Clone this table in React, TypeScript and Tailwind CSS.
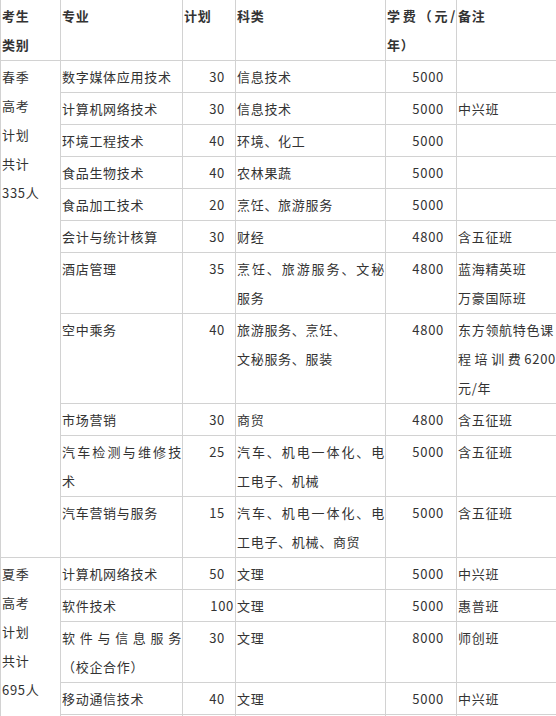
import React from "react";

type Line = string | { t: string; j: boolean };

const J = (t: string): Line => ({ t, j: true });

type Row = {
  major: Line[];
  plan: string;
  cat: Line[];
  fee: string;
  note: Line[];
  planTight?: boolean;
};

const spring: Row[] = [
  { major: ["数字媒体应用技术"], plan: "30", cat: ["信息技术"], fee: "5000", note: [] },
  { major: ["计算机网络技术"], plan: "30", cat: ["信息技术"], fee: "5000", note: ["中兴班"] },
  { major: ["环境工程技术"], plan: "40", cat: ["环境、化工"], fee: "5000", note: [] },
  { major: ["食品生物技术"], plan: "40", cat: ["农林果蔬"], fee: "5000", note: [] },
  { major: ["食品加工技术"], plan: "20", cat: ["烹饪、旅游服务"], fee: "5000", note: [] },
  { major: ["会计与统计核算"], plan: "30", cat: ["财经"], fee: "4800", note: ["含五征班"] },
  { major: ["酒店管理"], plan: "35", cat: [J("烹饪、旅游服务、文秘"), "服务"], fee: "4800", note: ["蓝海精英班", "万豪国际班"] },
  {
    major: ["空中乘务"],
    plan: "40",
    cat: ["旅游服务、烹饪、", "文秘服务、服装"],
    fee: "4800",
    note: ["东方领航特色课", J("程培训费6200"), "元/年"],
  },
  { major: ["市场营销"], plan: "30", cat: ["商贸"], fee: "4800", note: ["含五征班"] },
  { major: [J("汽车检测与维修技"), "术"], plan: "25", cat: [J("汽车、机电一体化、电"), "工电子、机械"], fee: "5000", note: ["含五征班"] },
  { major: ["汽车营销与服务"], plan: "15", cat: [J("汽车、机电一体化、电"), "工电子、机械、商贸"], fee: "5000", note: ["含五征班"] },
];

const summer: Row[] = [
  { major: ["计算机网络技术"], plan: "50", cat: ["文理"], fee: "5000", note: ["中兴班"] },
  { major: ["软件技术"], plan: "100", cat: ["文理"], fee: "5000", note: ["惠普班"], planTight: true },
  { major: [J("软件与信息服务"), "（校企合作）"], plan: "30", cat: ["文理"], fee: "8000", note: ["师创班"] },
  { major: ["移动通信技术"], plan: "40", cat: ["文理"], fee: "5000", note: ["中兴班"] },
  // next row only shows its top border at the bottom edge
  { major: [], plan: "", cat: [], fee: "", note: [] },
];

const cell = "border border-[#d2d2d2] align-top pl-px py-px leading-[29px]";

function Lines({ lines }: { lines: Line[] }) {
  return (
    <>
      {lines.map((l, i) =>
        typeof l === "string" ? (
          <div key={i}>{l}</div>
        ) : (
          <div key={i} className="text-justify [text-align-last:justify]">
            {l.t}
          </div>
        )
      )}
    </>
  );
}

function Group({ label, rows }: { label: string[]; rows: Row[] }) {
  return (
    <>
      {rows.map((r, i) => (
        <tr key={i} className="h-[32px]">
          {i === 0 && (
            <td rowSpan={rows.length} className={`${cell} pl-[2px]`}>
              <Lines lines={label} />
            </td>
          )}
          <td className={cell}>
            <Lines lines={r.major} />
          </td>
          <td className={`${cell} text-right ${r.planTight ? "pr-px" : "pr-[10px]"}`}>{r.plan}</td>
          <td className={cell}>
            <Lines lines={r.cat} />
          </td>
          <td className={`${cell} text-right pr-[12px]`}>{r.fee}</td>
          <td className={`${cell} pr-[2px]`}>
            <Lines lines={r.note} />
          </td>
        </tr>
      ))}
    </>
  );
}

export default function App() {
  return (
    <div className="w-[556px] h-[716px] overflow-hidden bg-white">
      <table
        className="border-collapse table-fixed w-[558px] text-[13px] tracking-[0.7px] text-[#333]"
        style={{ fontFamily: '"Noto Sans CJK SC", "Noto Sans", sans-serif' }}
      >
        <colgroup>
          <col className="w-[60px]" />
          <col className="w-[122px]" />
          <col className="w-[53px]" />
          <col className="w-[150px]" />
          <col className="w-[71px]" />
          <col className="w-[102px]" />
        </colgroup>
        <thead>
          <tr className="font-bold">
            <th className={`${cell} border-t-0 text-left pl-[2px] font-bold`}>
              <div>考生</div>
              <div>类别</div>
            </th>
            <th className={`${cell} border-t-0 text-left font-bold`}>专业</th>
            <th className={`${cell} border-t-0 text-left font-bold`}>计划</th>
            <th className={`${cell} border-t-0 text-left font-bold`}>科类</th>
            <th className={`${cell} border-t-0 text-left font-bold`}>
              <Lines lines={[J("学费（元/"), "年）"]} />
            </th>
            <th className={`${cell} border-t-0 text-left font-bold`}>备注</th>
          </tr>
        </thead>
        <tbody>
          <Group label={["春季", "高考", "计划", "共计", "335人"]} rows={spring} />
          <Group label={["夏季", "高考", "计划", "共计", "695人"]} rows={summer} />
        </tbody>
      </table>
    </div>
  );
}
